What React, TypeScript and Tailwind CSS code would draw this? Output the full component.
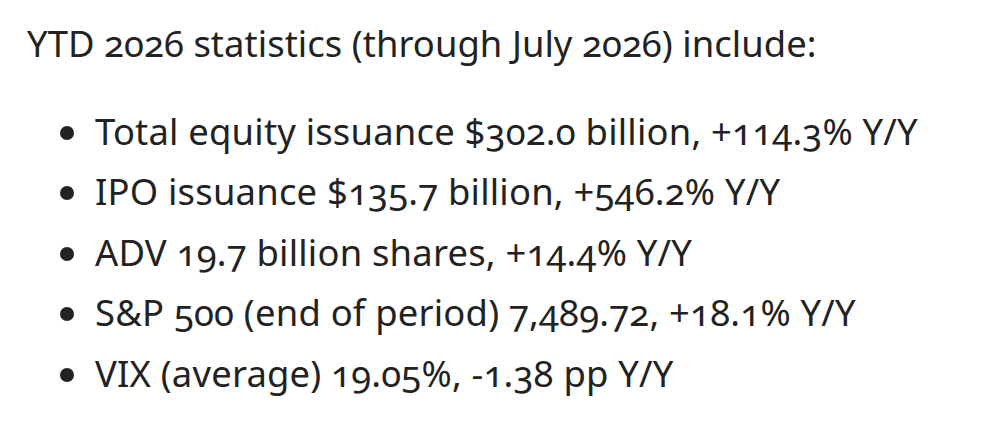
const items = [
  "Total equity issuance $302.0 billion, +114.3% Y/Y",
  "IPO issuance $135.7 billion, +546.2% Y/Y",
  "ADV 19.7 billion shares, +14.4% Y/Y",
  "S&P 500 (end of period) 7,489.72, +18.1% Y/Y",
  "VIX (average) 19.05%, -1.38 pp Y/Y",
];

export default function App() {
  return (
    <div className="min-h-screen bg-white pl-[27px] pt-[12.5px] text-[#222] font-['Noto_Sans',sans-serif] text-[36.4px] leading-[60.5px] [font-variant-numeric:oldstyle-nums] whitespace-nowrap">
      <p className="tracking-[0.05px]">YTD 2026 statistics (through July 2026) include:</p>
      <ul className="mt-[27.5px] pl-[33px]">
        {items.map((t) => (
          <li key={t} className="flex items-center gap-[21px] tracking-[0.2px]">
            <span className="mt-[4px] w-[14px] h-[14px] rounded-full bg-[#222] shrink-0" />
            <span>{t}</span>
          </li>
        ))}
      </ul>
    </div>
  );
}
